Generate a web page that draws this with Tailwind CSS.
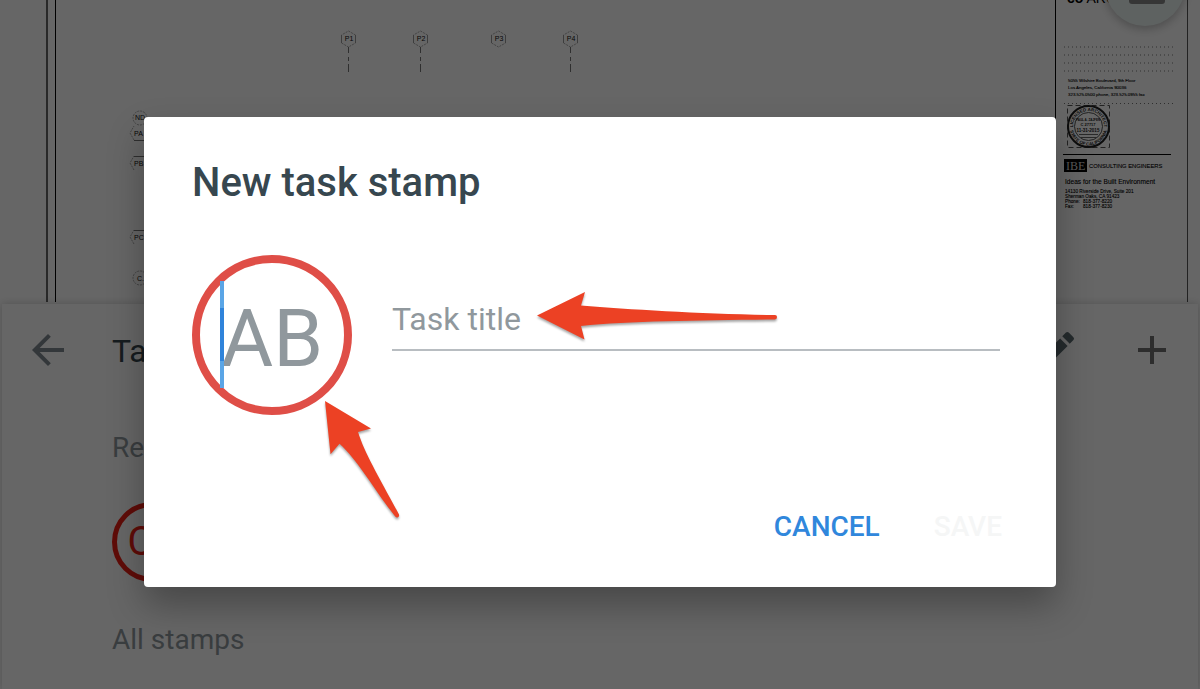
<!DOCTYPE html>
<html lang="en">
<head>
    <meta charset="UTF-8">
    <meta name="viewport" content="width=device-width, initial-scale=1.0">
    <title>New task stamp</title>
    <script src="https://cdn.jsdelivr.net/npm/@tailwindcss/browser@4"></script>
</head>
<body class="bg-white font-[Roboto,sans-serif]">
    <div class="relative flex flex-col min-h-screen overflow-hidden">
        <!-- Plan sheet -->
        <svg class="block w-full" viewBox="0 0 1200 302" font-family="Liberation Sans, Arial, sans-serif" aria-label="Plan sheet">
            <g fill="none">
                <path d="M47 0V302" stroke="#666" stroke-width="2"/>
                <path d="M55.5 0V302M1055.5 0V302" stroke="#000"/>
                <path d="M1187.5 0V302" stroke="#555"/>
            </g>

            <!-- Column grid marks -->
            <g fill="none" stroke="#aaa" stroke-dasharray="2 1">
                <path d="M348.5 31l7 4v8l-7 4-7-4v-8z"/>
                <path d="M420.5 31l7 4v8l-7 4-7-4v-8z"/>
                <path d="M498.5 31l7 4v8l-7 4-7-4v-8z"/>
                <path d="M570.5 31l7 4v8l-7 4-7-4v-8z"/>
            </g>
            <path d="M341.5 35v8m14-8v8M413.5 35v8m14-8v8M491.5 35v8m14-8v8M563.5 35v8m14-8v8" stroke="#999" fill="none"/>
            <path d="M348.5 47v6m0 4v4m0 3v8M420.5 47v6m0 4v4m0 3v8M570.5 47v6m0 4v4m0 3v8" stroke="#777" fill="none"/>
            <g font-size="7" text-anchor="middle" fill="#111">
                <text x="349" y="41">P1</text>
                <text x="421" y="41">P2</text>
                <text x="499" y="41">P3</text>
                <text x="571" y="41">P4</text>
            </g>

            <!-- Row grid marks -->
            <g fill="none" stroke="#aaa" stroke-dasharray="2 1">
                <circle cx="140" cy="118" r="7"/>
                <path d="M134 140l-4-7 4-7M134 170l-4-7 4-7M134 244l-4-7 4-7"/>
                <circle cx="140" cy="278" r="7"/>
            </g>
            <path d="M134 140.500h12M134 156.500h12M134 230.500h12" stroke="#777"/>
            <g font-size="7" fill="#111">
                <text x="135" y="120">ND</text>
                <text x="134" y="136">PA</text>
                <text x="134" y="166">PB</text>
                <text x="134" y="240">PC</text>
                <text x="137" y="281">C.</text>
            </g>

            <!-- Title block -->
            <text x="1067" y="3" font-size="14"><tspan font-weight="bold">co</tspan> ARCHITECTS</text>
            <path d="M1064 47h109M1064 55h109M1064 63h109M1064 71h109" stroke="#bbb" stroke-width="2" stroke-dasharray="1 3"/>
            <path d="M1064 103.500h109" stroke="#777" stroke-dasharray="1 3"/>
            <g font-size="4.400" fill="#000" stroke="#000" stroke-width="0.100">
                <text x="1068" y="82">5055 Wilshire Boulevard, 9th Floor</text>
                <text x="1068" y="89">Los Angeles, California 90036</text>
                <text x="1068" y="96">323.525.0500 phone, 323.525.0955 fax</text>
            </g>
            <rect x="1067.500" y="105.500" width="42" height="42" fill="none" stroke="#555" stroke-dasharray="5 3"/>
            <g fill="none" stroke="#222">
                <circle cx="1088.500" cy="126.500" r="20.500" stroke-width="2"/>
                <circle cx="1088.500" cy="126.500" r="14" stroke="#555"/>
            </g>
            <path id="sealTop" d="M1073 126.500a15.500 15.500 0 0 1 31 0" fill="none"/>
            <path id="sealBottom" d="M1069.500 126.500a19 19 0 0 0 38 0" fill="none"/>
            <g font-size="4.500" font-weight="bold" text-anchor="middle" fill="#222">
                <text><textPath href="#sealTop" startOffset="50%">LICENSED ARCHITECT</textPath></text>
                <text><textPath href="#sealBottom" startOffset="50%">STATE OF CALIFORNIA</textPath></text>
                <text x="1088" y="121" font-size="3">PAUL A. ZAJFEN</text>
                <text x="1088" y="126" font-size="4">C 27717</text>
                <text x="1088" y="132">11-31-2015</text>
            </g>
            <path d="M1079 134.500h19M1081 137.500h15" stroke="#666"/>
            <path d="M1063 154.500h108" stroke="#000"/>
            <rect x="1064" y="159" width="23" height="13" fill="#000"/>
            <text x="1066" y="170" font-size="12" font-family="Liberation Serif, serif" fill="#ddd">IBE</text>
            <g stroke="#000" stroke-width="0.100">
                <text x="1089" y="168" font-size="5.800">CONSULTING ENGINEERS</text>
                <text x="1065" y="184" font-size="6.600">Ideas for the Built Environment</text>
                <g font-size="4.700">
                    <text x="1065" y="193">14130 Riverside Drive, Suite 201</text>
                    <text x="1065" y="198">Sherman Oaks, CA 91423</text>
                    <text x="1065" y="203">Phone:</text>
                    <text x="1083" y="203">818-377-8220</text>
                    <text x="1065" y="208">Fax:</text>
                    <text x="1083" y="208">818-377-8230</text>
                </g>
            </g>
        </svg>

        <button aria-label="Sheet menu" class="absolute -top-[54px] right-[15px] flex justify-center items-end size-20 rounded-full bg-[#ecf5f3] shadow-[0_3px_10px_rgba(0,0,0,0.25)]">
            <span class="w-9 h-7 mb-[22px] ml-1 rounded-[3px] bg-[#888]"></span>
        </button>

        <!-- Stamps panel -->
        <section class="relative flex-1 mt-[2px] mx-[2px] bg-white shadow-[0_0_8px_rgba(0,0,0,0.2)]">
            <header class="flex items-center h-[92px] px-[22px]">
                <button aria-label="Back" class="text-[#808a91]">
                    <svg class="size-12" viewBox="0 0 24 24" fill="currentColor"><path d="M20 11H7.830l5.590-5.590L12 4l-8 8 8 8 1.410-1.410L7.830 13H20v-2z"/></svg>
                </button>
                <h2 class="flex-1 ml-10 pt-[2px] text-[32px] text-[#37474f]">Task stamps</h2>
                <button aria-label="Edit" class="text-[#5c6b71]">
                    <svg class="size-12" viewBox="0 0 24 24" fill="currentColor"><path d="M3 17.250V21h3.750L17.810 9.940l-3.750-3.750L3 17.250zM20.710 7.040a1 1 0 0 0 0-1.410l-2.340-2.340a1 1 0 0 0-1.410 0l-1.830 1.830 3.750 3.750 1.830-1.830z"/></svg>
                </button>
                <button aria-label="Add" class="ml-12 text-[#707070]">
                    <svg class="size-12" viewBox="0 0 24 24" fill="currentColor"><path d="M19 13h-6v6h-2v-6H5v-2h6V5h2v6h6v2z"/></svg>
                </button>
            </header>
            <div class="pl-[110px] text-[28px] leading-8 text-[#90989d]">
                <h3 class="mt-9">Recent</h3>
                <button class="flex items-center justify-center size-20 mt-[38px] mb-[42px] rounded-full border-[5px] border-[#ee2015] text-[40px] text-[#ee2015]">CE</button>
                <h3>All stamps</h3>
            </div>
        </section>
    </div>

    <!-- New stamp dialog -->
    <div class="absolute inset-0 flex items-start px-36 pt-[117px] bg-black/60">
        <form role="dialog" aria-labelledby="dialogTitle" class="relative w-full pt-11 pb-[39px] pl-12 pr-14 bg-white rounded shadow-[0_18px_36px_rgba(0,0,0,0.3)]">
            <h1 id="dialogTitle" class="text-[40px] leading-11 font-medium text-[#37474f]">New task stamp</h1>

            <div class="flex items-start gap-10 mt-[50px]">
                <div class="relative shrink-0">
                    <input type="text" aria-label="Stamp initials" placeholder="AB" maxlength="2" class="block size-40 pt-2 rounded-full border-8 border-[#df4e47] text-center text-[80px] placeholder:text-[#90989d] outline-none">
                    <!-- Caret -->
                    <span class="absolute left-7 top-[26px] flex items-center w-1 h-[107px] bg-[#5aa5e6]"><span class="w-1 h-[53px] bg-[#2f83da]"></span></span>
                </div>
                <input type="text" aria-label="Task title" placeholder="Task title" class="flex-1 min-w-0 h-16 mt-8 pt-[2px] border-b-2 border-[#b8bdc1] text-[32px] placeholder:text-[#90989d] outline-none">
            </div>

            <div class="flex justify-end gap-[54px] mt-[91px] -mr-[2px] text-[28px] font-medium">
                <button type="button" class="h-[42px] text-[#3087dc]">CANCEL</button>
                <button type="submit" disabled class="h-[42px] text-[#f5f6f6]">SAVE</button>
            </div>

            <!-- Pointer arrows -->
            <svg class="absolute left-0 top-0 w-[912px] h-[470px] pointer-events-none drop-shadow-[0_2px_1px_rgba(0,0,0,0.35)]" viewBox="144 117 912 470" fill="#ec4124">
                <path d="M537 315.500L585 292l-4 13.500c50 4 120 8.500 194 9.500q2 0 2 2t-2 2.500c-74 1-144 1.500-194 6.500l3.500 13.500z"/>
                <path d="M325 401l46 27.500-13 3.500c7 22 20 43 41 82.500q.5 2-1 2.700t-3-1c-19-24-37-56-55.500-72.500l-9 10.500z"/>
            </svg>
        </form>
    </div>
</body>
</html>
